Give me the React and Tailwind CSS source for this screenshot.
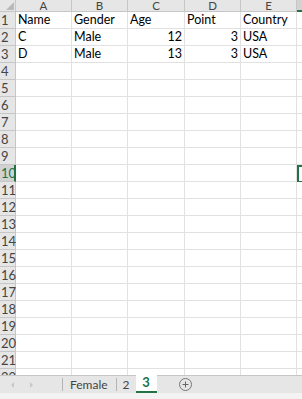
import React from "react";

const cols = ["A", "B", "C", "D", "E"];
const widths = ["w-[56px]", "w-[56px]", "w-[57px]", "w-[56px]", "w-[56px]"];

const data = {
  1: ["Name", "Gender", "Age", "Point", "Country"],
  2: ["C", "Male", 12, 3, "USA"],
  3: ["D", "Male", 13, 3, "USA"],
};

const rows = Array.from({ length: 22 }, (_, i) => i + 1);

const Cell = ({ value, w }) => {
  const isNum = typeof value === "number";
  return (
    <div
      className={`${w} shrink-0 h-full border-r border-b border-[#e1e1e1] flex items-center px-[2px] overflow-hidden whitespace-nowrap ${
        isNum ? "justify-end" : "justify-start"
      }`}
    >
      {value}
    </div>
  );
};

export default function App() {
  return (
    <div
      className="w-[302px] h-[399px] overflow-hidden bg-white text-[12.5px] text-black flex flex-col"
      style={{ fontFamily: "Lato, 'Open Sans', sans-serif" }}
    >
      {/* Sheet grid */}
      <div className="h-[375px] overflow-hidden flex flex-col">
        {/* Column headers */}
        <div className="flex h-[12px] shrink-0 bg-[#e6e6e6] text-[#444] text-[11.5px]">
          <div className="w-[16px] shrink-0 h-full border-r border-b border-[#c6c6c6] relative">
            <div className="absolute right-[1px] bottom-[1px] w-0 h-0 border-l-[8px] border-l-transparent border-b-[8px] border-b-[#b9b9b9]" />
          </div>
          {cols.map((c, i) => (
            <div
              key={c}
              className={`${widths[i]} shrink-0 h-full border-r border-b border-[#c6c6c6] flex items-center justify-center leading-[11px]`}
            >
              {c}
            </div>
          ))}
          <div className="flex-1 h-full bg-[#d2d2d2] border-b-2 border-[#217346]" />
        </div>

        {/* Rows */}
        {rows.map((r) => {
          const sel = r === 10;
          const vals = data[r] || ["", "", "", "", ""];
          return (
            <div key={r} className="flex h-[17px] shrink-0">
              <div
                className={`w-[16px] shrink-0 h-full flex items-center pl-[1px] leading-none border-b text-[13px] ${
                  sel
                    ? "bg-[#d2d2d2] text-[#217346] border-r-2 border-r-[#217346] border-b-[#c6c6c6]"
                    : "bg-[#e6e6e6] text-[#444] border-r border-[#c6c6c6]"
                }`}
              >
                {r}
              </div>
              {vals.map((v, i) => (
                <Cell key={i} value={v} w={widths[i]} />
              ))}
              <div
                className={`flex-1 h-full border-b border-[#e1e1e1] ${
                  sel ? "border-l-2 border-l-[#217346] border-y-2 border-y-[#217346]" : ""
                }`}
              />
            </div>
          );
        })}
      </div>

      {/* Sheet tabs */}
      <div className="h-[18px] shrink-0 bg-[#e6e6e6] border-t border-[#c6c6c6] flex items-stretch text-[#444] text-[12px]">
        <div className="w-[62px] shrink-0 flex items-center pl-[10px]">
          <svg width="30" height="8" viewBox="0 0 30 8">
            <path d="M4 1L1 4L4 7Z" fill="#c8c8c8" />
            <path d="M20 1L23 4L20 7Z" fill="#c8c8c8" />
          </svg>
        </div>
        <div className="w-px bg-[#b5b5b5] my-[2px]" />
        <div className="pl-[7px] pr-[8px] flex items-center">Female</div>
        <div className="w-px bg-[#b5b5b5] my-[2px]" />
        <div className="px-[6px] flex items-center">2</div>
        <div className="w-[21px] -mt-px bg-white border-b-2 border-[#217346] flex items-center justify-center text-[#217346] font-bold text-[13px]">
          3
        </div>
        <div className="flex-1 flex items-center pl-[22px]">
          <div className="w-[13px] h-[13px] rounded-full border border-[#777] flex items-center justify-center">
            <svg width="7" height="7" viewBox="0 0 7 7">
              <path d="M3.5 0.5v6M0.5 3.5h6" stroke="#666" strokeWidth="1" />
            </svg>
          </div>
        </div>
      </div>
      <div className="flex-1 bg-[#f3f3f3]" />
    </div>
  );
}
